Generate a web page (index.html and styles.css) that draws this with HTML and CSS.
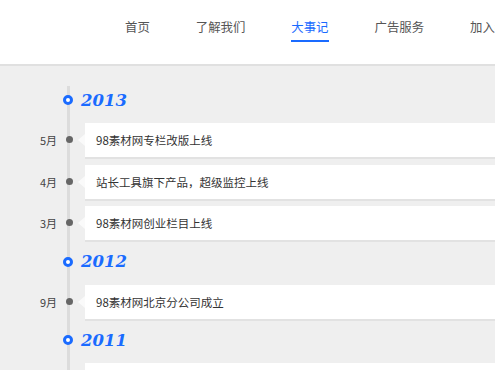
FILE: index.html
```html
<!DOCTYPE html>
<html>
<head>
	<meta charset="UTF-8">
	<title>大事记</title>
	<link rel="stylesheet" href="styles.css">
</head>
<body>
<div class="header">
	<ul class="nav">
		<li>首页</li>
		<li>了解我们</li>
		<li class="active">大事记</li>
		<li>广告服务</li>
		<li>加入我们</li>
	</ul>
</div>

<div class="timeline">
	<div class="year"><span class="ring"></span><span class="year-num">2013</span></div>
	<div class="event"><span class="month">5月</span><span class="dot"></span><div class="card">98素材网专栏改版上线</div></div>
	<div class="event"><span class="month">4月</span><span class="dot"></span><div class="card">站长工具旗下产品，超级监控上线</div></div>
	<div class="event"><span class="month">3月</span><span class="dot"></span><div class="card">98素材网创业栏目上线</div></div>

	<div class="year"><span class="ring"></span><span class="year-num">2012</span></div>
	<div class="event"><span class="month">9月</span><span class="dot"></span><div class="card">98素材网北京分公司成立</div></div>

	<div class="year"><span class="ring"></span><span class="year-num">2011</span></div>
	<div class="event"><span class="month">12月</span><span class="dot"></span><div class="card">98素材网正式上线</div></div>
</div>
</body>
</html>
```

FILE: styles.css
```css
html, body {
	margin: 0;
	height: 370px;
	overflow: hidden;
}
body {
	background-color: #efefef;
	font-family: "Noto Sans CJK SC", "Noto Sans", sans-serif;
	color: #333;
}

.header {
	height: 64px;
	background-color: #fff;
	border-bottom: 2px solid #e0e0e0;
}
.nav {
	display: flex;
	gap: 46px;
	margin: 0;
	padding: 0 0 0 125px;
	list-style: none;
	white-space: nowrap;
}
.nav li {
	padding-top: 18px;
	padding-bottom: 4px;
	font-size: 12.4px;
	line-height: 18px;
	color: #555;
	border-bottom: 2px solid transparent;
}
.nav li.active {
	color: #1a6bff;
	border-bottom-color: #1a6bff;
}

.timeline {
	position: relative;
	padding-top: 20px;
}
.timeline::before {
	content: "";
	position: absolute;
	left: 67px;
	top: 20px;
	bottom: 0;
	width: 3px;
	background-color: #dcdcdc;
}

.year {
	position: relative;
	display: flex;
	align-items: center;
	height: 28px;
	margin-bottom: 9px;
}
.ring {
	box-sizing: border-box;
	width: 10px;
	height: 10px;
	margin-left: 63px;
	border: 3px solid #1a6bff;
	border-radius: 50%;
	background-color: #fff;
}
.year-num {
	margin-left: 8px;
	font-family: "DejaVu Serif", serif;
	font-weight: bold;
	font-style: italic;
	font-size: 16.5px;
	color: #1a6bff;
}

.event {
	position: relative;
	display: flex;
	align-items: center;
	height: 36px;
	margin-bottom: 5.5px;
}
.month {
	width: 57px;
	margin-top: -2px;
	text-align: right;
	font-size: 11px;
	color: #444;
}
.dot {
	width: 7px;
	height: 7px;
	margin-left: 9px;
	margin-top: -3px;
	border-radius: 50%;
	background-color: #666;
}
.card {
	position: relative;
	flex: 1;
	box-sizing: border-box;
	height: 36px;
	margin-left: 12px;
	padding-left: 11px;
	background-color: #fff;
	border-bottom: 2px solid #e2e2e2;
	font-size: 11.5px;
	line-height: 34px;
	color: #333;
	white-space: nowrap;
}
.card::before {
	content: "";
	position: absolute;
	left: -7px;
	top: 11px;
	border-top: 6px solid transparent;
	border-bottom: 6px solid transparent;
	border-right: 7px solid #fafafa;
}
```
